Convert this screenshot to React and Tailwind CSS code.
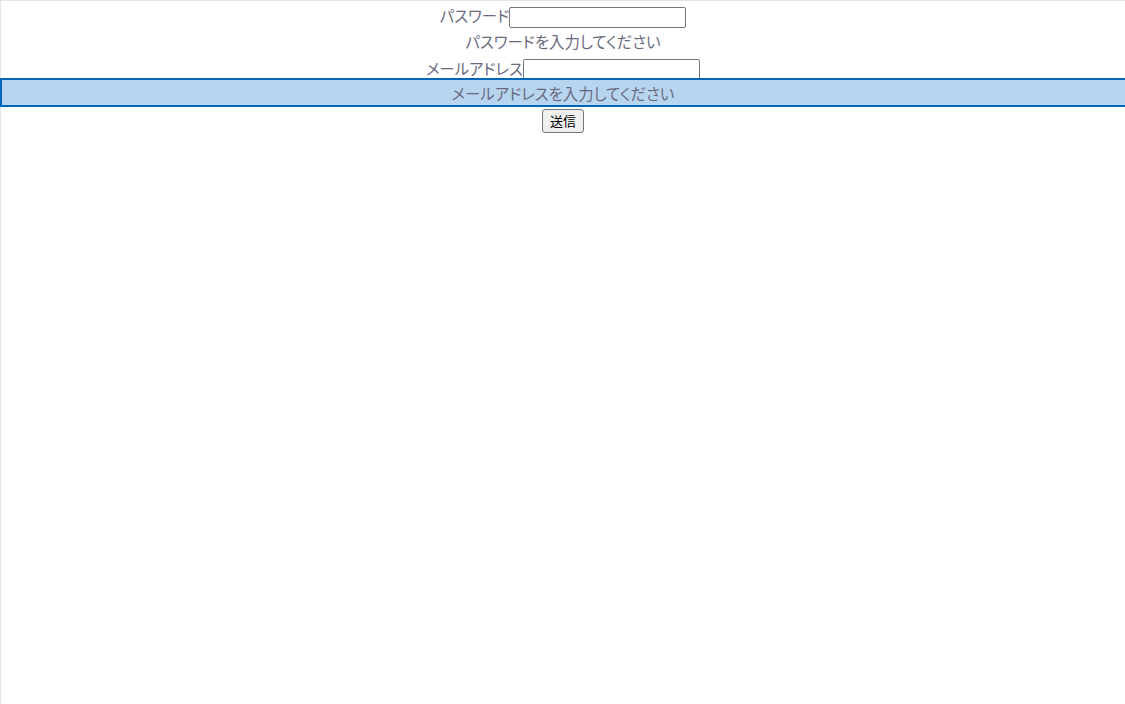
import React, { useState } from 'react';

const jp = "font-['Noto_Sans_CJK_JP','Noto_Sans',sans-serif] [font-feature-settings:'palt']";

const App = () => {
  const [password, setPassword] = useState('');
  const [email, setEmail] = useState('');

  return (
    <div className="overflow-hidden bg-white">
      <div className={`min-h-[704px] border-t border-l border-[#e5e5e5] text-center text-[15.4px] text-[#6a6a7e] ${jp}`}>
        {/* Password */}
        <div className="flex h-[28px] items-start justify-center">
          <label htmlFor="password" className="mt-[3px] leading-[22px]">パスワード</label>
          <input
            id="password"
            type="password"
            value={password}
            onChange={(e) => setPassword(e.target.value)}
            className="mt-[6px] h-[21px] w-[177px] shrink-0 rounded-[2px] border border-[#767676] bg-white px-1 text-[13px] outline-none"
          />
        </div>
        <div className="flex h-[26px] items-start justify-center pt-[1px] leading-[22px]">
          パスワードを入力してください
        </div>

        {/* Email */}
        <div className="flex h-[23px] items-start justify-center">
          <label htmlFor="email" className="mt-[2px] leading-[22px]">メールアドレス</label>
          <input
            id="email"
            type="email"
            value={email}
            onChange={(e) => setEmail(e.target.value)}
            className="mt-[4px] h-[21px] w-[177px] shrink-0 rounded-[2px] border border-[#767676] bg-white px-1 text-[13px] outline-none"
          />
        </div>
        <div className="relative z-10 -ml-px -mr-[6px] flex h-[29px] items-center justify-center border-2 border-[#0067b8] bg-[#b8d5f0] pr-[5px] leading-[22px]">
          メールアドレスを入力してください
        </div>

        {/* Submit */}
        <div className="flex justify-center pt-[2px]">
          <button
            type="button"
            className="h-[24px] w-[42px] rounded-[3px] border border-[#767676] bg-[#efefef] text-[13px] text-black"
          >
            送信
          </button>
        </div>
      </div>
    </div>
  );
};

export default App;
